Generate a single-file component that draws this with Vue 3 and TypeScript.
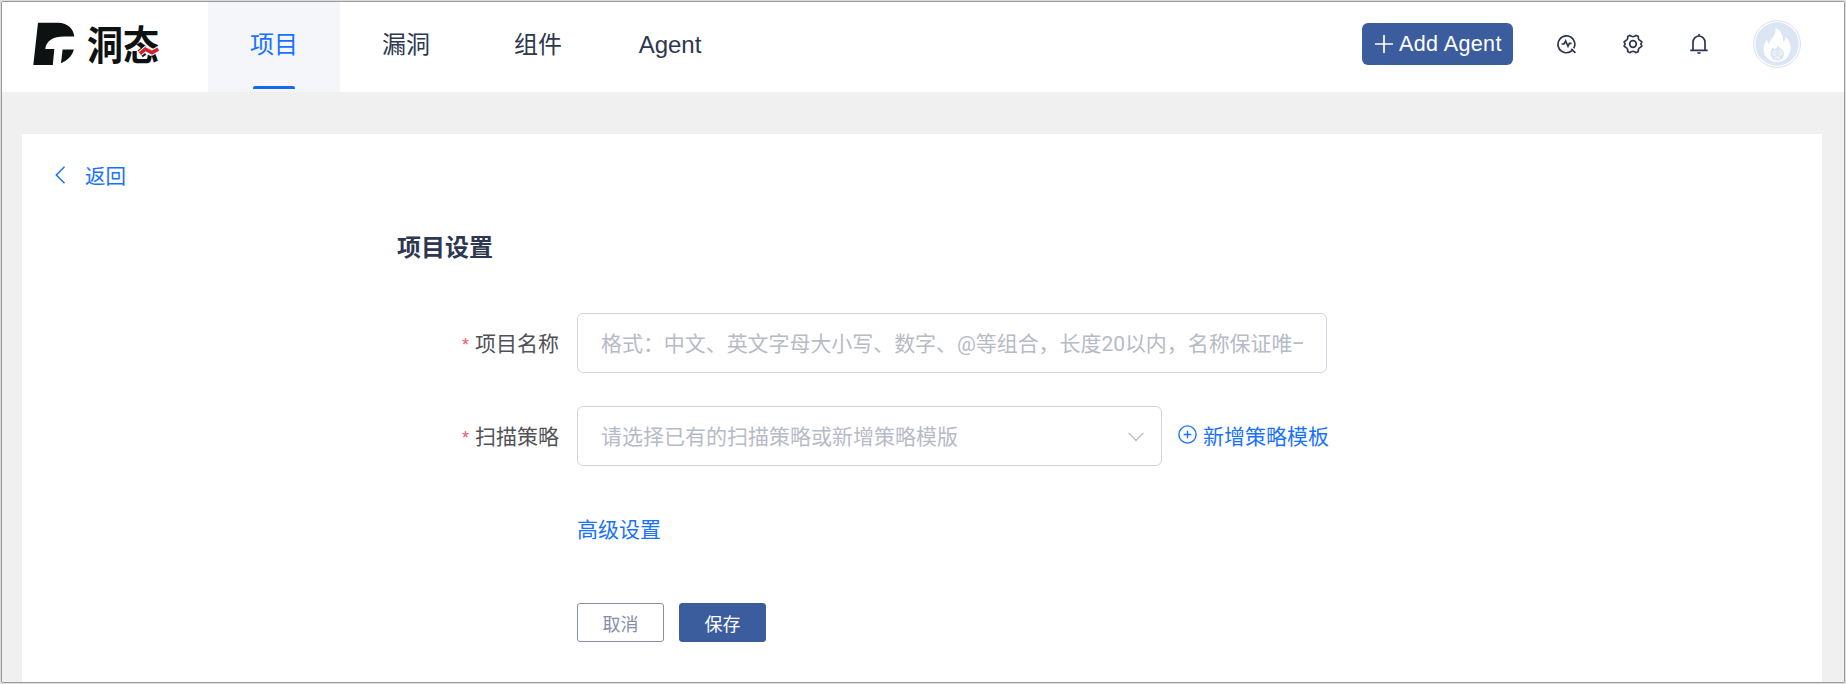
<script setup lang="ts">
import { ref } from 'vue'

const navItems: string[] = ['项目', '漏洞', '组件', 'Agent']
const active = ref('项目')
const projectName = ref('')
const strategy = ref('')
</script>

<template>
  <div class="frame">
    <header class="header">
      <div class="logo">
        <svg class="mark" width="42" height="44" viewBox="0 0 42 44">
          <path fill="#0e1111" d="M5 .7H25C34 1 40.300 6 41.300 14.500H31C20 14.500 13 19 12.300 27H21.300L19.800 43H.3Z" />
          <path fill="#0e1111" d="M29.600 27.500H40.800C39.500 33.500 34.500 38.500 28 41.200Z" />
        </svg>
        <span class="word">
          <span class="word-text">洞态</span>
          <svg class="wave" width="22" height="11" viewBox="-1 -1 22 11" fill="none">
            <path d="M1 6.600 6.300 2.200 13 5.600 19.300 2" stroke="#fff" stroke-width="5.600" />
            <path d="M1 6.600 6.300 2.200 13 5.600 19.300 2" stroke="#d3212b" stroke-width="3.600" />
          </svg>
        </span>
      </div>
      <nav class="nav">
        <a
          v-for="item in navItems"
          :key="item"
          class="nav-item"
          :class="{ active: item === active }"
          @click="active = item"
        >{{ item }}</a>
      </nav>
      <div class="tools">
        <button class="add-agent">
          <svg width="18" height="18" viewBox="0 0 18 18"><path d="M9 0V18M0 9H18" stroke="#fff" stroke-width="1.700" /></svg>
          <span>Add Agent</span>
        </button>
        <svg class="tool" width="20" height="20" viewBox="0 0 20 20">
          <path d="M15.200 16.400A8.400 8.400 0 1 1 16.800 14.300M14.200 14.800 18.400 18.800" />
          <path d="M4.500 10H7L8.600 7 11 12.300 12.400 9.400H14.600" />
        </svg>
        <svg class="tool" width="20" height="20" viewBox="0 0 20 20">
          <path d="M7 1.300 8.300 2.300Q10 3 11.700 2.300L13 1.300 15.300 2.500 15.300 4.400Q15.700 6 17.400 6.800L18.700 7.600V8.600L17.800 10 18.700 11.400V12.400L17.400 13.200Q15.700 14 15.300 15.600L15.300 17.500 13 18.700 11.700 17.700Q10 17 8.300 17.700L7 18.700 4.700 17.500V15.600Q4.300 14 2.600 13.200L1.300 12.400V11.400L2.200 10 1.300 8.600V7.600L2.600 6.800Q4.300 6 4.700 4.400V2.500Z" stroke-linejoin="round" />
          <circle cx="10" cy="10" r="3.300" />
        </svg>
        <svg class="tool" width="20" height="22" viewBox="0 0 20 22">
          <path d="M4 17V9.200A6 6.200 0 0 1 16 9.200V17M1.300 17.300H18.700M10 1V3" />
          <path class="solid" d="M8 19.200H12A2 1.700 0 0 1 8 19.200Z" />
        </svg>
        <svg class="avatar" width="48" height="48" viewBox="0 0 48 48">
          <circle cx="24" cy="24" r="23.400" fill="#fff" stroke="#d6e0ef" />
          <circle cx="24" cy="24" r="21.700" fill="#dbe5f4" />
          <path fill="#fff" d="M22.700 8C28 11 30.500 15 30.300 22.500 32 21 32.600 19 32.500 16.500 37 21 38.200 26 37.200 31 35.800 37 31.500 41.500 24.500 42 16 42 10.600 36 10.500 29.500 10.500 25.500 12.300 22 14.500 19 14.400 21.500 14.800 23 16 24 17 19.500 23 16.500 22.700 8Z" />
          <path fill="#dbe5f4" d="M24.700 25C25.500 28.500 31 28.500 31 33.500 31 38 28.300 40.600 24.500 40.700 20 40.700 17.500 37.500 17.500 33.500 17.500 30 19 29 20 27.500 20.700 28.500 21.300 29 22 29.300 23.600 28 24.700 27 24.700 25Z" />
          <path fill="none" stroke="#fff" stroke-width=".8" d="M23.500 31.200A2.300 2.300 0 1 0 23.500 34.700M25.500 31.200A2.300 2.300 0 1 1 25.500 34.700M21 33H23.500M25.500 33H28M23 40V37H26V40" />
        </svg>
      </div>
    </header>

    <main class="card">
      <a class="back">
        <svg width="11" height="18" viewBox="0 0 11 18"><path d="M9.500 .7 1.300 9 9.500 17.300" fill="none" stroke="#1971ff" stroke-width="1.500" /></svg>
        <span>返回</span>
      </a>
      <h1 class="title">项目设置</h1>
      <form class="form" @submit.prevent>
        <div class="row">
          <label class="label"><i>*</i>项目名称</label>
          <input
            v-model="projectName"
            class="field wide"
            placeholder="格式：中文、英文字母大小写、数字、@等组合，长度20以内，名称保证唯一"
          />
        </div>
        <div class="row">
          <label class="label"><i>*</i>扫描策略</label>
          <div class="field select">
            <span>{{ strategy || '请选择已有的扫描策略或新增策略模版' }}</span>
            <svg width="16" height="10" viewBox="0 0 16 10"><path d="M.6 .9 8 8.500 15.400 .9" fill="none" stroke="#b9bdca" stroke-width="1.300" /></svg>
          </div>
          <a class="add-link">
            <svg width="19" height="19" viewBox="0 0 19 19" fill="none" stroke="#1971ff" stroke-width="1.400">
              <circle cx="9.500" cy="9.500" r="8.600" /><path d="M9.500 5.700V13.300M5.700 9.500H13.300" />
            </svg>
            <span>新增策略模板</span>
          </a>
        </div>
        <a class="advanced">高级设置</a>
        <div class="actions">
          <button type="button" class="btn">取消</button>
          <button type="submit" class="btn primary">保存</button>
        </div>
      </form>
    </main>
  </div>
</template>

<style>
body {
  margin: 0;
  background: #dcdcdc;
}
</style>

<style scoped>
.frame {
  box-sizing: border-box;
  width: 1844px;
  height: 682px;
  margin: 1px;
  border: 1px solid #9b9b9b;
  border-radius: 2px;
  overflow: hidden;
  background: #f0f0f0;
  font-family: "Liberation Sans", "Noto Sans CJK SC", sans-serif;
  color: #2d3750;
}
.header {
  display: flex;
  height: 90px;
  background: #fff;
}
.logo {
  display: flex;
  box-sizing: border-box;
  width: 206px;
  padding: 20px 0 0 31px;
}
.word {
  position: relative;
  margin-left: 13px;
  height: 44px;
}
.word-text {
  display: block;
  font: 700 36px/42px "Noto Sans CJK SC", sans-serif;
  color: #0e1111;
  transform: translate(-1px, -1px) scaleY(1.1);
}
.wave {
  position: absolute;
  left: 50px;
  top: 24px;
}
.nav {
  display: flex;
}
.nav-item {
  position: relative;
  width: 132px;
  font-size: 24px;
  line-height: 86px;
  text-align: center;
}
.nav-item.active {
  background: #f4f6fa;
  color: #1971ff;
}
.nav-item.active::after {
  content: "";
  position: absolute;
  left: 45px;
  bottom: 3px;
  width: 42px;
  height: 3px;
  border-radius: 2px 2px 0 0;
  background: #1868f2;
}
.tools {
  display: flex;
  align-items: center;
  height: 84px;
  margin-left: auto;
  padding-right: 43px;
}
.add-agent {
  display: flex;
  align-items: center;
  gap: 6px;
  width: 151px;
  height: 42px;
  margin-right: 44px;
  padding: 0 0 0 13px;
  border: 0;
  border-radius: 6px;
  background: #3b5c9d;
  color: #fff;
  font: 21.5px "Liberation Sans", sans-serif;
  letter-spacing: 0.4px;
  white-space: nowrap;
}
.tool {
  margin-right: 46px;
  fill: none;
  stroke: #2d3750;
  stroke-width: 1.7;
}
.tool .solid {
  fill: #2d3750;
  stroke: none;
}
.avatar {
  margin-left: -2px;
}
.card {
  display: flow-root;
  box-sizing: border-box;
  width: 1800px;
  height: 560px;
  margin: 42px 0 0 20px;
  background: #fff;
}
.back {
  display: flex;
  width: max-content;
  margin: 28px 0 0 33px;
  gap: 19px;
  height: 30px;
  font-size: 20.5px;
  line-height: 30px;
  color: #1971ff;
}
.back svg {
  margin-top: 4px;
}
.title {
  margin: 36px 0 0 375px;
  font-size: 24px;
  font-weight: 700;
  font-family: "Noto Sans CJK SC", sans-serif;
  line-height: 36px;
}
.form {
  margin: 49px 0 0;
  font-size: 21px;
}
.row {
  display: flex;
  align-items: center;
  height: 60px;
  margin-bottom: 33px;
}
.label {
  width: 537px;
  margin-right: 18px;
  padding-bottom: 2px;
  text-align: right;
  color: #515257;
}
.label i {
  margin-right: 6px;
  font-style: normal;
  font-size: 18px;
  color: #f5566c;
}
.field {
  box-sizing: border-box;
  height: 60px;
  border: 1px solid #d2d4e0;
  border-radius: 6px;
  padding: 0 23px;
  background: #fff;
  color: #b7bac7;
  font: 21px "Liberation Sans", "Noto Sans CJK SC", sans-serif;
}
.wide {
  width: 750px;
  padding-top: 1px;
  outline: none;
  font-family: Roboto, "Noto Sans CJK SC", sans-serif;
  letter-spacing: -0.06px;
}
.field::placeholder {
  color: #b7bac7;
  opacity: 1;
}
.select {
  display: flex;
  align-items: center;
  justify-content: space-between;
  width: 585px;
  padding-right: 17px;
}
.select span {
  padding-bottom: 2px;
}
.select svg {
  margin-top: 2px;
}
.add-link {
  display: flex;
  align-items: center;
  gap: 6px;
  margin-left: 16px;
  padding-bottom: 3px;
  color: #1971ff;
}
.advanced {
  display: block;
  width: max-content;
  margin: 46px 0 0 555px;
  line-height: 36px;
  color: #1971ff;
}
.actions {
  display: flex;
  gap: 15px;
  margin: 55px 0 0 555px;
}
.btn {
  width: 87px;
  height: 39px;
  padding: 0;
  border: 1px solid #868fa8;
  border-radius: 3px;
  background: #fff;
  color: #868fa8;
  font: 18px "Liberation Sans", "Noto Sans CJK SC", sans-serif;
}
.btn.primary {
  border-color: #3b5c9d;
  background: #3b5c9d;
  color: #fff;
}
</style>
